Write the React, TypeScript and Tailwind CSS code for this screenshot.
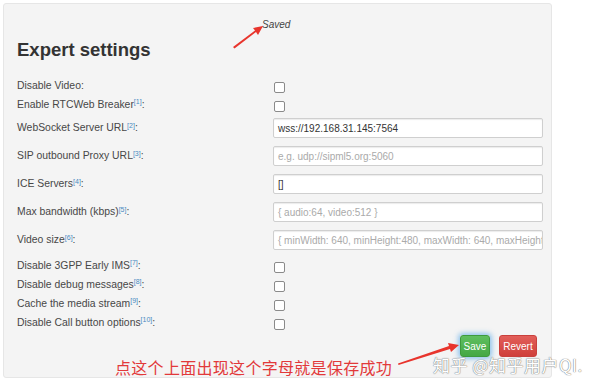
import React from "react";

type Row =
  | { kind: "check"; label: string; ref?: number }
  | { kind: "input"; label: string; ref?: number; value?: string; placeholder?: string };

const topRows: Row[] = [
  { kind: "check", label: "Disable Video" },
  { kind: "check", label: "Enable RTCWeb Breaker", ref: 1 },
  { kind: "input", label: "WebSocket Server URL", ref: 2, value: "wss://192.168.31.145:7564" },
  { kind: "input", label: "SIP outbound Proxy URL", ref: 3, placeholder: "e.g. udp://sipml5.org:5060" },
  { kind: "input", label: "ICE Servers", ref: 4, value: "[]" },
  { kind: "input", label: "Max bandwidth (kbps)", ref: 5, placeholder: "{ audio:64, video:512 }" },
  {
    kind: "input",
    label: "Video size",
    ref: 6,
    placeholder: "{ minWidth: 640, minHeight:480, maxWidth: 640, maxHeight:480 }",
  },
];

const bottomRows: Row[] = [
  { kind: "check", label: "Disable 3GPP Early IMS", ref: 7 },
  { kind: "check", label: "Disable debug messages", ref: 8 },
  { kind: "check", label: "Cache the media stream", ref: 9 },
  { kind: "check", label: "Disable Call button options", ref: 10 },
];

function Label({ text, n }: { text: string; n?: number }) {
  return (
    <div className="w-[256px] shrink-0 text-[10.4px] leading-[12px] text-[#474747]">
      {text}
      {n !== undefined && (
        <sup className="text-[7px] text-[#4a8bc2]">[{n}]</sup>
      )}
      :
    </div>
  );
}

function SettingRow({ row }: { row: Row }) {
  if (row.kind === "check") {
    return (
      <div className="flex h-[19px] items-center">
        <Label text={row.label} n={row.ref} />
        <span className="mt-[3px] ml-px block h-[11px] w-[11px] rounded-[2px] border border-[#8a8a8a] bg-white" />
      </div>
    );
  }
  return (
    <div className="flex h-[28px] items-center">
      <Label text={row.label} n={row.ref} />
      <div className="flex h-[20px] w-[270px] items-center overflow-hidden whitespace-nowrap rounded-[2px] border border-[#cfcfcf] bg-white px-[4px] text-[10px] shadow-[inset_0_1px_1px_rgba(0,0,0,0.08)]">
        {row.value ? (
          <span className="text-[#333]">{row.value}</span>
        ) : (
          <span className="text-[#aaa]">{row.placeholder}</span>
        )}
      </div>
    </div>
  );
}

export default function App() {
  return (
    <div className="relative h-[388px] w-[600px] overflow-hidden bg-white font-['Liberation_Sans',Arial,sans-serif]">
      <div className="ml-[3px] mt-[3px] flex h-[375px] w-[549px] flex-col rounded-[3px] border border-[#e6e6e6] bg-[#f4f4f4] pl-[13px]">
        <div className="pl-[245px] pt-[15px] text-[10px] italic leading-[12px] text-[#444]">
          Saved
        </div>
        <h1 className="mt-[8px] text-[18.5px] font-bold leading-[22px] text-[#333]">
          Expert settings
        </h1>
        <div className="mt-[15px] flex flex-col">
          {topRows.map((r) => (
            <SettingRow key={r.label} row={r} />
          ))}
        </div>
        <div className="mt-[2px] flex flex-col">
          {bottomRows.map((r) => (
            <SettingRow key={r.label} row={r} />
          ))}
        </div>
        <div className="mt-[3px] flex justify-end gap-[9px] pr-[14px]">
          <button className="h-[22px] w-[30px] rounded-[3px] border border-[#3e9a3e] bg-gradient-to-b from-[#5fbf5f] to-[#45a845] text-[10px] text-white shadow-[0_0_5px_2px_rgba(102,175,233,0.7)]">
            Save
          </button>
          <button className="h-[22px] w-[38px] rounded-[3px] border border-[#c9403c] bg-gradient-to-b from-[#e25e59] to-[#cf3f3a] text-[10px] text-white">
            Revert
          </button>
        </div>
      </div>

      {/* annotations */}
      <svg className="absolute left-0 top-0" width="600" height="388" viewBox="0 0 600 388">
        <polygon points="233,47 234.5,48.5 256,32 258,35 263,26 253,28 255,30.5" fill="#e8342c" />
        <polygon points="398,363.5 398.5,365 450,349 451,352 459,345 448,343 449,346" fill="#e8342c" />
      </svg>
      <div className="absolute left-[115px] top-[357px] font-['Noto_Sans_CJK_SC',sans-serif] text-[16px] leading-[20px] tracking-[0.3px] text-[#e2393a]">
        点这个上面出现这个字母就是保存成功
      </div>
      <div className="absolute left-[433px] top-[355px] font-['Noto_Sans_CJK_SC',sans-serif] text-[17px] leading-[20px] tracking-[0.5px] text-white [text-shadow:0_0_1px_#777,0_0_1px_#777]">
        知乎 @知乎用户QI.
      </div>
    </div>
  );
}
